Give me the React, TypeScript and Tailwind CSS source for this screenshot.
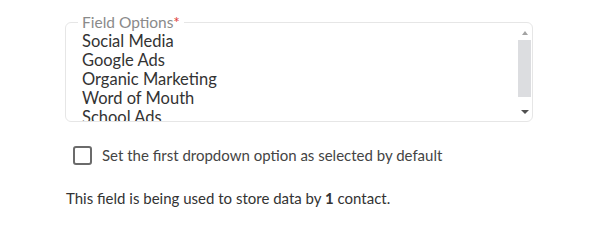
export default function App() {
  const options = [
    "Social Media",
    "Google Ads",
    "Organic Marketing",
    "Word of Mouth",
    "School Ads",
    "Other",
  ];
  return (
    <div className="w-[600px] h-[250px] bg-white font-['Lato',sans-serif] text-[#333] pt-[14px] pl-[65px]">
      <fieldset className="w-[468px] m-0 min-w-0 border border-[#e6e6e6] rounded-[6px] pl-[12px] pr-0 pb-0 pt-0">
        <legend className="px-[4px] text-[15.5px] leading-[16px] text-[#8a8a8a]">
          Field Options<span className="text-[#e0413a]">*</span>
        </legend>
        <div className="flex h-[91px]">
          <div className="flex-1 overflow-hidden pl-[4px] pt-[2px]">
            {options.map((o) => (
              <div key={o} className="text-[16.5px] leading-[19px] whitespace-nowrap text-[#333]">
                {o}
              </div>
            ))}
          </div>
          <div className="w-[15px] flex flex-col items-center">
            <div className="h-[10px] pt-[1px]">
              <div className="w-0 h-0 border-l-[3.5px] border-r-[3.5px] border-b-[4px] border-l-transparent border-r-transparent border-b-[#a3a3a3]" />
            </div>
            <div className="h-[57px] w-[13px] bg-[#dcdde0]" />
            <div className="flex-1" />
            <div className="w-0 h-0 border-l-[4px] border-r-[4px] border-t-[4px] border-l-transparent border-r-transparent border-t-[#505050] mb-[7px]" />
          </div>
        </div>
      </fieldset>
      <div className="flex items-center ml-[8px] mt-[24px]">
        <div className="w-[19px] h-[19px] border-2 border-[#6b6b6b] rounded-[3px] box-border" />
        <span className="ml-[10px] text-[15px] leading-[19px] text-[#444]">
          Set the first dropdown option as selected by default
        </span>
      </div>
      <p className="ml-[1px] mt-[23px] text-[15px] leading-[20px] text-[#333]">
        This field is being used to store data by <span className="font-bold">1</span> contact.
      </p>
    </div>
  );
}
